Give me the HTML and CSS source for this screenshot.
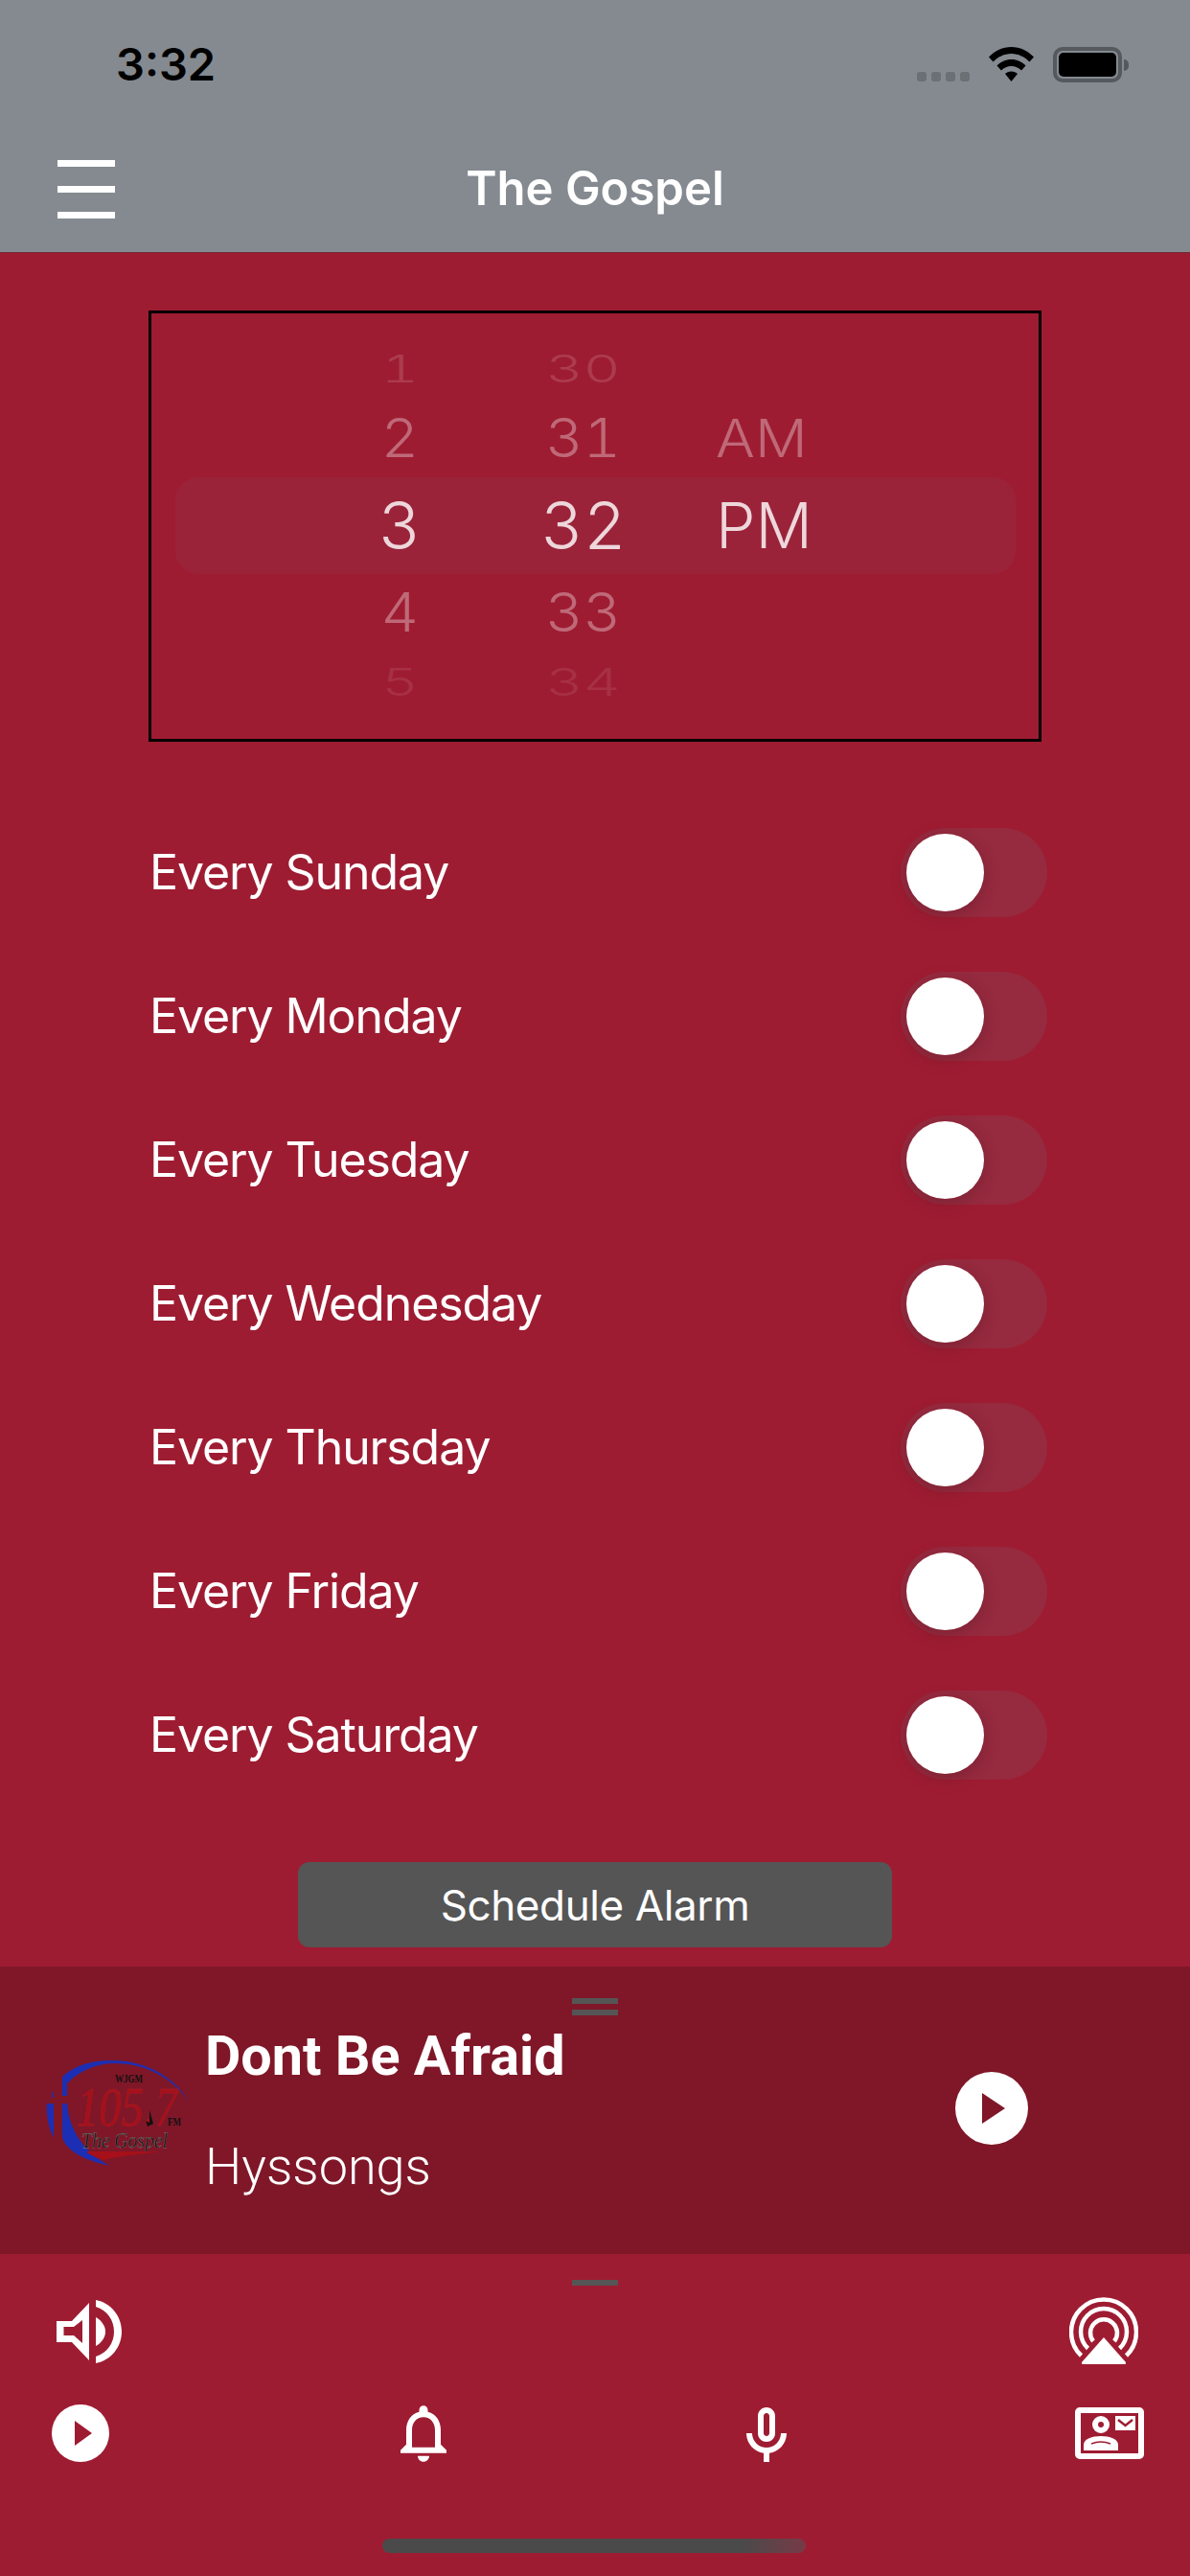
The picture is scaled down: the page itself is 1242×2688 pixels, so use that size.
FILE: index.html
```html
<!DOCTYPE html>
<html lang="en">
<head>
<meta charset="utf-8">
<title>The Gospel</title>
<link rel="stylesheet" href="styles.css">
</head>
<body>
<div class="screen">
  <header class="top">
    <div class="status">
      <span class="clock">3:32</span>
      <div class="status-icons">
        <div class="signal"><i></i><i></i><i></i><i></i></div>
        <svg class="wifi" viewBox="0 0 47 36"><path d="M0 10.500C6.500 4 14.500 0 23.500 0S40.500 4 47 10.500L42.500 15.500C37.500 10.500 31 7 23.500 7S9.500 10.500 4.500 15.500Z"/><path d="M8.500 19.500C12.500 15.500 17.500 13 23.500 13S34.500 15.500 38.500 19.500L34 24.500C31 21.500 27.500 20 23.500 20S16 21.500 13 24.500Z"/><path d="M17 28C18.500 26.500 21 25.500 23.500 25.500S28.500 26.500 30 28L23.500 36Z"/></svg>
        <div class="battery"><span class="battery-fill"></span></div>
        <span class="battery-nub"></span>
      </div>
    </div>
    <div class="nav">
      <div class="burger"><i></i><i></i><i></i></div>
      <h1 class="title">The Gospel</h1>
    </div>
  </header>

  <main class="content">
    <section class="picker">
      <div class="picker-band"></div>
      <div class="wheel wheel-hour">
        <span class="item far-top">1</span><span class="item near">2</span><span class="item sel">3</span><span class="item near">4</span><span class="item far-bot">5</span>
      </div>
      <div class="wheel wheel-min">
        <span class="item far-top">30</span><span class="item near">31</span><span class="item sel">32</span><span class="item near">33</span><span class="item far-bot">34</span>
      </div>
      <div class="wheel wheel-ampm">
        <span class="item far-top"></span><span class="item near">AM</span><span class="item sel">PM</span><span class="item near"></span><span class="item far-bot"></span>
      </div>
    </section>

    <ul class="days">
      <li class="day"><span>Every Sunday</span><span class="switch"><span class="knob"></span></span></li>
      <li class="day"><span>Every Monday</span><span class="switch"><span class="knob"></span></span></li>
      <li class="day"><span>Every Tuesday</span><span class="switch"><span class="knob"></span></span></li>
      <li class="day"><span>Every Wednesday</span><span class="switch"><span class="knob"></span></span></li>
      <li class="day"><span>Every Thursday</span><span class="switch"><span class="knob"></span></span></li>
      <li class="day"><span>Every Friday</span><span class="switch"><span class="knob"></span></span></li>
      <li class="day"><span>Every Saturday</span><span class="switch"><span class="knob"></span></span></li>
    </ul>

    <button class="schedule">Schedule Alarm</button>
  </main>

  <section class="player">
    <div class="grip"><i></i><i></i></div>
    <svg class="logo" viewBox="0 0 149 110">
      <path fill="#1c2fb4" d="M17 17C30 5 48 0 68 0C105 0 135 18 149 43C132 18 103 3 72 3C52 3 35 11 22 24V37H17Z"/>
      <path fill="#1c2fb4" d="M17 45H22C24 72 40 97 67 110C38 104 20 93 17 80Z"/>
      <path fill="#1c2fb4" d="M8 45V80C3 72 0 58 1 45Z"/>
      <rect x="6" y="33" width="1.500" height="6" fill="#1c2fb4"/>
      <text class="logo-call" x="72" y="23" textLength="29" lengthAdjust="spacingAndGlyphs">WJGM</text>
      <text class="logo-freq" x="32" y="68" textLength="105" lengthAdjust="spacingAndGlyphs">105.7</text>
      <path d="M108 52L112 66L106 69L104 63L108 65Z" fill="#111"/>
      <text class="logo-fm" x="127" y="68" textLength="14" lengthAdjust="spacingAndGlyphs">FM</text>
      <text class="logo-name" x="37" y="91" textLength="90" lengthAdjust="spacingAndGlyphs">The Gospel</text>
      <path fill="#a5101a" d="M42 95H120C100 98 80 99 60 104C52 101 46 99 42 95Z"/>
    </svg>
    <div class="track">
      <div class="track-name">Dont Be Afraid</div>
      <div class="track-artist">Hyssongs</div>
    </div>
    <svg class="player-play" viewBox="0 0 76 76"><circle cx="38" cy="38" r="38" fill="#fff"/><path d="M28 22L52 38L28 54Z" fill="#7f1728"/></svg>
  </section>

  <footer class="bottom">
    <div class="grip-single"></div>
    <div class="bottom-row">
      <svg class="ic-speaker" viewBox="0 0 68 66"><path fill-rule="evenodd" fill="#fff" d="M0 22H16L34 3V63L16 44H0ZM7.500 28V37H18L27 45V21L18 28Z"/><path fill="#fff" d="M41 18C48 22 51 28 51 33C51 38 48 44 41 48Z"/><path fill="#fff" d="M41 0C57 3 68 17 68 33C68 49 57 63 41 66V59C53 55 60 45 60 33C60 21 53 11 41 7Z"/></svg>
      <svg class="ic-airplay" viewBox="0 0 72 70"><g fill="none" stroke="#fff" stroke-width="4.500"><path d="M12.500 61A34 34 0 1 1 59.500 61"/><path d="M19.500 53.500A24 24 0 1 1 52.500 53.500"/><path d="M25 46A14 14 0 1 1 47 46"/></g><path fill="#fff" d="M36 42L59 68Q59.500 70 58 70H14Q12.500 70 13 68Z"/></svg>
    </div>
    <div class="tabs">
      <svg class="ic-play" viewBox="0 0 60 60"><circle cx="30" cy="30" r="30" fill="#fff"/><path d="M24 17L42 30L24 43Z" fill="#9e1c32"/></svg>
      <svg class="ic-bell" viewBox="4 2.500 16 19.500"><path fill="#fff" d="M12 22c1.100 0 2-.9 2-2h-4c0 1.100.9 2 2 2zm6-6v-5c0-3.070-1.630-5.640-4.500-6.320V4c0-.83-.67-1.500-1.500-1.500s-1.500.67-1.500 1.500v.68C7.640 5.360 6 7.920 6 11v5l-2 2v1h16v-1l-2-2zm-2 1H8v-6c0-2.480 1.510-4.500 4-4.500s4 2.020 4 4.500v6z"/></svg>
      <svg class="ic-mic" viewBox="5 2 14 19"><path fill="#fff" d="M12 14c1.660 0 3-1.340 3-3V5c0-1.660-1.340-3-3-3S9 3.340 9 5v6c0 1.660 1.340 3 3 3zm-1-9c0-.55.45-1 1-1s1 .45 1 1v6c0 .55-.45 1-1 1s-1-.45-1-1V5zm6 6c0 2.760-2.240 5-5 5s-5-2.240-5-5H5c0 3.530 2.610 6.430 6 6.920V21h2v-3.080c3.390-.49 6-3.390 6-6.920h-2z"/></svg>
      <svg class="ic-contact" viewBox="0 0 72 54"><rect x="3" y="3" width="66" height="48" rx="2" fill="none" stroke="#fff" stroke-width="6"/><ellipse cx="27" cy="18" rx="9" ry="9" fill="#fff"/><circle cx="27" cy="18" r="3" fill="#9e1c32"/><path fill="#fff" d="M9 45V39C9 33 18 30 27 30C36 30 45 33 45 39V45Z"/><path d="M17 38Q27 34 37 38" fill="none" stroke="#9e1c32" stroke-width="1.500"/><rect x="42" y="9" width="21" height="15" fill="#fff"/><path d="M45 13L52.500 19L60 13" fill="none" stroke="#9e1c32" stroke-width="2.500"/></svg>
    </div>
    <div class="home-bar"></div>
  </footer>
</div>
</body>
</html>
```
FILE: styles.css
```css
* { box-sizing: border-box; }
html, body { margin: 0; padding: 0; }
body { background: #9e1c32; font-family: Roboto, "Liberation Sans", sans-serif; color: #fff; }
.screen { width: 1242px; height: 2688px; display: flex; flex-direction: column; overflow: hidden; }

/* header */
.top { height: 264px; background: #848a90; flex: none; border-bottom: 1px solid #6f2a37; }
.status { height: 132px; display: flex; justify-content: space-between; padding: 36px 64px 0 121px; }
.clock { font-family: Inter, sans-serif; font-weight: 600; font-size: 47px; line-height: 62px; color: #000; height: 62px; }
.status-icons { display: flex; align-items: flex-start; padding: 13px 0 0; }
.signal { display: flex; gap: 5px; margin: 26px 20px 0 0; }
.signal i { width: 10px; height: 10px; border-radius: 3px; background: #6b7075; }
.wifi { width: 47px; height: 36px; fill: #000; margin-right: 20px; }
.battery { width: 72px; height: 37px; border: 4px solid #55595e; border-radius: 10px; padding: 2px; }
.battery-fill { display: block; height: 100%; background: #000; border-radius: 5px; }
.battery-nub { width: 5px; height: 12px; margin: 13px 0 0 2px; background: #55595e; border-radius: 0 5px 5px 0; }
.nav { height: 132px; position: relative; display: flex; align-items: center; justify-content: center; }
.burger { position: absolute; left: 60px; top: 35px; width: 60px; display: flex; flex-direction: column; gap: 20px; }
.burger i { display: block; height: 7px; background: #fff; }
.title { margin: 0 0 2px; font-family: Inter, sans-serif; font-weight: 600; font-size: 49px; line-height: 64px; color: #fff; }

/* picker */
.content { flex: none; display: flex; flex-direction: column; padding-top: 60px; height: 1788px; }
.picker { position: relative; margin-left: 155px; width: 932px; height: 450px; border: 3px solid #000; display: grid; grid-template-columns: 138px 246px 1fr; padding: 27px 0 0 190px; font-family: Inter, sans-serif; font-weight: 300; font-variant-numeric: tabular-nums; }
.picker-band { position: absolute; left: 25px; top: 171px; width: 877px; height: 101px; background: #9b2339; border-radius: 24px; }
.wheel { position: relative; display: flex; flex-direction: column; align-items: center; }
.wheel-ampm { align-items: flex-start; padding-left: 15px; }
.item { display: block; font-size: 69px; line-height: 1; text-align: center; white-space: nowrap; }
.wheel-ampm .item { font-size: 66px; }
.far-top, .far-bot { height: 60px; line-height: 60px; transform: scale(.87, .58); }
.near { height: 86px; line-height: 86px; transform: scale(.88, .82); color: rgba(255,255,255,.34); }
.wheel-ampm .near { transform-origin: left center; transform: scale(.92, .82); }
.far-top { color: rgba(255,255,255,.14); }
.far-bot { color: rgba(255,255,255,.09); }
.sel { height: 96px; line-height: 96px; color: rgba(255,255,255,.82); }

/* days */
.days { list-style: none; margin: 61px 0 0; padding: 0 149px 0 156px; }
.day { height: 150px; display: flex; align-items: center; justify-content: space-between; font-family: Inter, sans-serif; font-size: 50px; letter-spacing: -1.100px; }
.switch { position: relative; width: 153px; height: 93px; border-radius: 47px; background: #962a3f; display: block; }
.knob { position: absolute; left: 6px; top: 6px; width: 81px; height: 81px; border-radius: 50%; background: #fff; box-shadow: 0 4px 16px rgba(80,20,30,.35); }

/* button */
.schedule { align-self: center; margin-top: 58px; width: 620px; height: 89px; background: #555; color: #fff; border: 0; border-radius: 12px; font-family: Inter, sans-serif; font-size: 44px; letter-spacing: -.4px; }

/* player */
.player { flex: none; position: relative; height: 300px; background: #7f1728; display: flex; align-items: center; padding: 0 169px 0 48px; }
.grip { position: absolute; left: 597px; top: 33px; width: 48px; display: flex; flex-direction: column; gap: 6px; }
.grip i { display: block; height: 6px; background: #555; }
.logo { width: 149px; height: 110px; flex: none; margin: 6px 0 0; }
.logo-call { font: 700 13px "Liberation Serif", serif; fill: #111; }
.logo-freq { font: italic 400 58px "Liberation Serif", serif; fill: #a5101a; stroke: #b8202a; stroke-width: .3px; }
.logo-fm { font: 700 13px "Liberation Serif", serif; fill: #111; }
.logo-name { font: italic 400 24px "Liberation Serif", serif; fill: #111; stroke: #bbb; stroke-width: .25px; }
.track { flex: 1; margin-left: 17px; align-self: stretch; padding-top: 57px; }
.track-name { font-weight: 700; font-size: 57.500px; line-height: 74px; }
.track-artist { font-weight: 300; font-size: 54px; line-height: 60px; margin-top: 48px; }
.player-play { width: 76px; height: 76px; flex: none; margin-top: -4px; }

/* bottom */
.bottom { flex: 1; position: relative; padding: 48px 54px 0 54px; }
.grip-single { position: absolute; left: 597px; top: 27px; width: 48px; height: 6px; background: #555; }
.bottom-row { display: flex; justify-content: space-between; align-items: flex-start; padding: 0 0 0 5px; margin-right: -3px; }
.ic-speaker { width: 68px; height: 66px; }
.ic-airplay { width: 72px; height: 70px; margin-top: -3px; margin-right: 3px; }
.tabs { display: grid; grid-template-columns: 364px 361px 343px 72px; align-items: start; margin-top: 42px; }
.ic-play { width: 60px; height: 60px; }
.ic-bell { width: 48px; height: 59px; margin-top: 1px; }
.ic-mic { width: 42px; height: 57px; margin-top: 3px; }
.ic-contact { width: 72px; height: 54px; margin-top: 3px; }
.home-bar { position: absolute; left: 399px; top: 297px; width: 442px; height: 15px; border-radius: 8px; background: linear-gradient(90deg, #4a4a4a 0, #4a4a4a 85%, #773a47 100%); }
```
